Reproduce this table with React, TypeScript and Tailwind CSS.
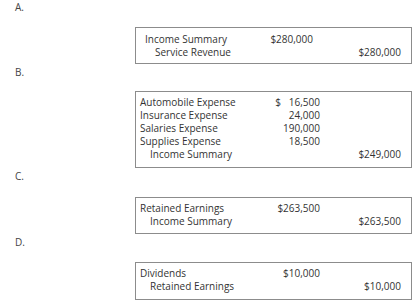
import React from "react";

type Row = { label: string; indent?: boolean; debit?: string; credit?: string };

function Box({
  rows,
  className,
  debitClass,
}: {
  rows: Row[];
  className: string;
  debitClass: string;
}) {
  return (
    <div className={`ml-[135px] w-[277px] border border-[#8c8c8c] pr-[10px] ${className}`}>
      {rows.map((r, i) => (
        <div key={i} className="flex leading-[13px]">
          <div className={`flex-1 whitespace-nowrap ${r.indent ? "pl-[10px]" : ""}`}>{r.label}</div>
          <div className={`text-right whitespace-pre ${debitClass}`}>{r.debit ?? ""}</div>
          <div className="w-[81px] text-right whitespace-nowrap">{r.credit ?? ""}</div>
        </div>
      ))}
    </div>
  );
}

function Label({ children, className }: { children: React.ReactNode; className: string }) {
  return <div className={`pl-[15px] leading-[13px] text-[#444] ${className}`}>{children}</div>;
}

export default function App() {
  return (
    <div
      className="w-[419px] h-[304px] bg-white text-[10px] text-[#333333] overflow-hidden"
      style={{ fontFamily: '"Open Sans", "Noto Sans", sans-serif' }}
    >
      <Label className="pt-[1px]">A.</Label>
      <Box
        className="mt-[13px] h-[37px] pt-[5px] pl-[9px]"
        debitClass="w-[50px] pr-[7px]"
        rows={[
          { label: "Income Summary", debit: "$280,000" },
          { label: "Service Revenue", indent: true, credit: "$280,000" },
        ]}
      />
      <Label className="mt-[2px]">B.</Label>
      <Box
        className="mt-[12px] h-[77px] pt-[4px] pl-[4px]"
        debitClass="w-[60px]"
        rows={[
          { label: "Automobile Expense", debit: "$   16,500" },
          { label: "Insurance Expense", debit: "24,000" },
          { label: "Salaries Expense", debit: "190,000" },
          { label: "Supplies Expense", debit: "18,500" },
          { label: "Income Summary", indent: true, credit: "$249,000" },
        ]}
      />
      <Label className="mt-[2px]">C.</Label>
      <Box
        className="mt-[14px] h-[37px] pt-[4px] pl-[4px]"
        debitClass="w-[60px]"
        rows={[
          { label: "Retained Earnings", debit: "$263,500" },
          { label: "Income Summary", indent: true, credit: "$263,500" },
        ]}
      />
      <Label className="mt-[2px]">D.</Label>
      <Box
        className="mt-[13px] h-[38px] pt-[4px] pl-[4px]"
        debitClass="w-[60px]"
        rows={[
          { label: "Dividends", debit: "$10,000" },
          { label: "Retained Earnings", indent: true, credit: "$10,000" },
        ]}
      />
    </div>
  );
}
